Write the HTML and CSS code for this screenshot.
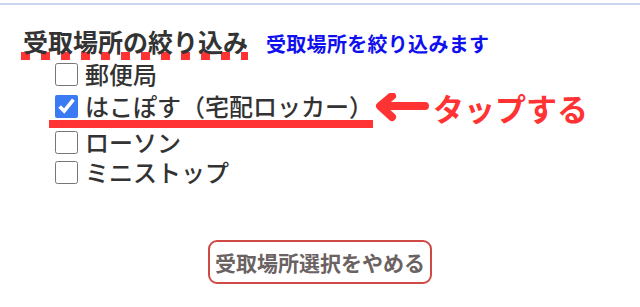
FILE: index.html
```html
<!DOCTYPE html>
<html lang="ja">
<head>
<meta charset="utf-8">
<title>受取場所の絞り込み</title>
<link rel="stylesheet" href="styles.css">
</head>
<body>
<div class="page">
  <div class="topline"></div>
  <div class="filter-head">
    <h2 class="filter-title">受取場所の絞り込み</h2>
    <span class="filter-note">受取場所を絞り込みます</span>
  </div>
  <ul class="options">
    <li class="option">
      <label class="option-row"><input type="checkbox" class="check"><span class="option-label">郵便局</span></label>
    </li>
    <li class="option option--marked">
      <div class="marked">
        <label class="option-row"><input type="checkbox" class="check" checked><span class="option-label">はこぽす（宅配ロッカー）</span></label>
        <div class="tap-underline"></div>
      </div>
      <div class="annotation">
        <svg class="arrow" width="54" height="30" viewBox="0 0 54 30" aria-hidden="true">
          <path d="M50 13 H8" fill="none" stroke="#ff3333" stroke-width="8" stroke-linecap="round"/>
          <path d="M17 3 L5 13 L17 24" fill="none" stroke="#ff3333" stroke-width="8" stroke-linecap="round" stroke-linejoin="round"/>
        </svg>
        <span class="annotation-text">タップする</span>
      </div>
    </li>
    <li class="option option--after-mark">
      <label class="option-row"><input type="checkbox" class="check"><span class="option-label">ローソン</span></label>
    </li>
    <li class="option option--last">
      <label class="option-row"><input type="checkbox" class="check"><span class="option-label">ミニストップ</span></label>
    </li>
  </ul>
  <div class="actions">
    <button type="button" class="cancel-btn">受取場所選択をやめる</button>
  </div>
</div>
</body>
</html>
```
FILE: styles.css
```css
html, body {
  margin: 0;
  padding: 0;
  background: #ffffff;
}
body {
  font-family: "Noto Sans CJK JP", "Noto Sans", sans-serif;
  color: #333333;
}
.page {
  padding-top: 3px;
  width: 640px;
  height: 307px;
  box-sizing: border-box;
  overflow: hidden;
}
.topline {
  height: 2px;
  background: #c9d6ee;
}
.filter-head {
  display: flex;
  align-items: baseline;
  gap: 18px;
  margin: 23px 0 0 21px;
}
.filter-title {
  margin: 0;
  font-size: 25px;
  font-weight: 700;
  line-height: 26px;
  color: #333333;
  padding: 0 0 6px 2px;
  background: repeating-linear-gradient(90deg, #ff3333 0 9px, transparent 9px 20px) left bottom / 100% 8px no-repeat;
}
.filter-note {
  font-size: 20px;
  font-weight: 700;
  letter-spacing: 0.3px;
  color: #1010ee;
  line-height: 24px;
}
.options {
  list-style: none;
  margin: 2px 0 0 0;
  padding: 0 0 0 55px;
}
.option {
  display: flex;
  align-items: flex-start;
}
.option + .option {
  margin-top: 8px;
}
.option.option--after-mark {
  margin-top: 2px;
}
.option.option--last {
  margin-top: 6px;
}
.option-row {
  display: flex;
  align-items: center;
  gap: 7px;
  height: 24px;
}
.check {
  width: 23px;
  height: 23px;
  margin: 0;
  accent-color: #3a7af2;
}
.option-label {
  font-size: 24px;
  font-weight: 500;
  line-height: 24px;
  color: #333333;
}
.marked {
  display: flex;
  flex-direction: column;
}
.tap-underline {
  margin: 2px 0 0 -6px;
  width: 324px;
  height: 8px;
  background: #ff3333;
}
.annotation {
  display: flex;
  align-items: center;
  gap: 4px;
  margin: -4px 0 0 2px;
}
.arrow {
  display: block;
}
.annotation-text {
  font-size: 31px;
  font-weight: 700;
  color: #ff3333;
  line-height: 36px;
}
.actions {
  display: flex;
  justify-content: center;
  margin-top: 56px;
}
.cancel-btn {
  width: 224px;
  height: 44px;
  padding: 0;
  border: 2px solid #cf4a44;
  border-radius: 9px;
  background: #ffffff;
  font-family: "Noto Sans CJK JP", sans-serif;
  font-size: 21px;
  font-weight: 700;
  color: #6b6262;
}
```
